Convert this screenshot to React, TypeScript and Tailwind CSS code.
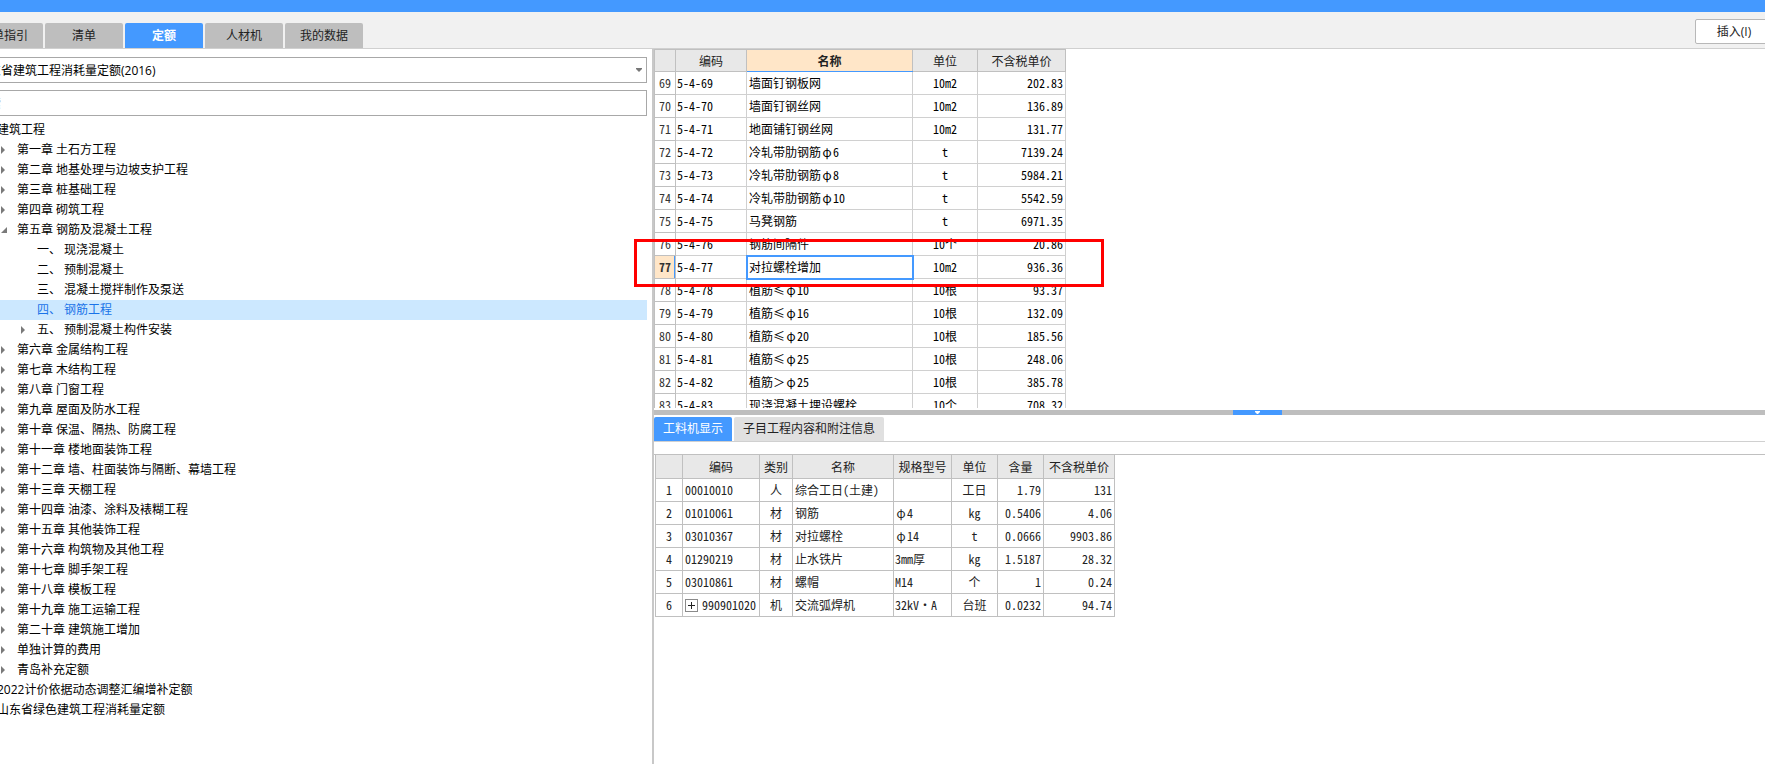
import React, { useState } from 'react';
import { clsx } from 'clsx';

interface TreeNode {
  label: string;
  level: number;
  state?: 'open' | 'closed';
}

const navTabs = ['清单指引', '清单', '定额', '人材机', '我的数据'];

const tree: TreeNode[] = [
  { label: '建筑工程', level: 0 },
  { label: '第一章 土石方工程', level: 1, state: 'closed' },
  { label: '第二章 地基处理与边坡支护工程', level: 1, state: 'closed' },
  { label: '第三章 桩基础工程', level: 1, state: 'closed' },
  { label: '第四章 砌筑工程', level: 1, state: 'closed' },
  { label: '第五章 钢筋及混凝土工程', level: 1, state: 'open' },
  { label: '一、 现浇混凝土', level: 2 },
  { label: '二、 预制混凝土', level: 2 },
  { label: '三、 混凝土搅拌制作及泵送', level: 2 },
  { label: '四、 钢筋工程', level: 2 },
  { label: '五、 预制混凝土构件安装', level: 2, state: 'closed' },
  { label: '第六章 金属结构工程', level: 1, state: 'closed' },
  { label: '第七章 木结构工程', level: 1, state: 'closed' },
  { label: '第八章 门窗工程', level: 1, state: 'closed' },
  { label: '第九章 屋面及防水工程', level: 1, state: 'closed' },
  { label: '第十章 保温、隔热、防腐工程', level: 1, state: 'closed' },
  { label: '第十一章 楼地面装饰工程', level: 1, state: 'closed' },
  { label: '第十二章 墙、柱面装饰与隔断、幕墙工程', level: 1, state: 'closed' },
  { label: '第十三章 天棚工程', level: 1, state: 'closed' },
  { label: '第十四章 油漆、涂料及裱糊工程', level: 1, state: 'closed' },
  { label: '第十五章 其他装饰工程', level: 1, state: 'closed' },
  { label: '第十六章 构筑物及其他工程', level: 1, state: 'closed' },
  { label: '第十七章 脚手架工程', level: 1, state: 'closed' },
  { label: '第十八章 模板工程', level: 1, state: 'closed' },
  { label: '第十九章 施工运输工程', level: 1, state: 'closed' },
  { label: '第二十章 建筑施工增加', level: 1, state: 'closed' },
  { label: '单独计算的费用', level: 1, state: 'closed' },
  { label: '青岛补充定额', level: 1, state: 'closed' },
  { label: '2022计价依据动态调整汇编增补定额', level: 0 },
  { label: '山东省绿色建筑工程消耗量定额', level: 0 },
];

const quotas = [
  { no: 69, code: '5-4-69', name: '墙面钉钢板网', unit: '10m2', price: '202.83' },
  { no: 70, code: '5-4-70', name: '墙面钉钢丝网', unit: '10m2', price: '136.89' },
  { no: 71, code: '5-4-71', name: '地面铺钉钢丝网', unit: '10m2', price: '131.77' },
  { no: 72, code: '5-4-72', name: '冷轧带肋钢筋φ6', unit: 't', price: '7139.24' },
  { no: 73, code: '5-4-73', name: '冷轧带肋钢筋φ8', unit: 't', price: '5984.21' },
  { no: 74, code: '5-4-74', name: '冷轧带肋钢筋φ10', unit: 't', price: '5542.59' },
  { no: 75, code: '5-4-75', name: '马凳钢筋', unit: 't', price: '6971.35' },
  { no: 76, code: '5-4-76', name: '钢筋间隔件', unit: '10个', price: '20.86' },
  { no: 77, code: '5-4-77', name: '对拉螺栓增加', unit: '10m2', price: '936.36' },
  { no: 78, code: '5-4-78', name: '植筋≤φ10', unit: '10根', price: '93.37' },
  { no: 79, code: '5-4-79', name: '植筋≤φ16', unit: '10根', price: '132.09' },
  { no: 80, code: '5-4-80', name: '植筋≤φ20', unit: '10根', price: '185.56' },
  { no: 81, code: '5-4-81', name: '植筋≤φ25', unit: '10根', price: '248.06' },
  { no: 82, code: '5-4-82', name: '植筋＞φ25', unit: '10根', price: '385.78' },
  { no: 83, code: '5-4-83', name: '现浇混凝土埋设螺栓', unit: '10个', price: '708.32' },
];

const resources = [
  { code: '00010010', kind: '人', name: '综合工日(土建)', spec: '', unit: '工日', amount: '1.79', price: '131' },
  { code: '01010061', kind: '材', name: '钢筋', spec: 'φ4', unit: 'kg', amount: '0.5406', price: '4.06' },
  { code: '03010367', kind: '材', name: '对拉螺栓', spec: 'φ14', unit: 't', amount: '0.0666', price: '9903.86' },
  { code: '01290219', kind: '材', name: '止水铁片', spec: '3mm厚', unit: 'kg', amount: '1.5187', price: '28.32' },
  { code: '03010861', kind: '材', name: '螺帽', spec: 'M14', unit: '个', amount: '1', price: '0.24' },
  { code: '990901020', kind: '机', name: '交流弧焊机', spec: '32kV·A', unit: '台班', amount: '0.0232', price: '94.74', expandable: true },
];

// the diameter sign takes a full character cell
const Spec: React.FC<{ text: string }> = ({ text }) => {
  const [before, after] = text.split('φ');
  if (after === undefined) return <>{text}</>;
  return (
    <>
      {before}
      <span className="inline-block w-3 text-center">φ</span>
      {after}
    </>
  );
};

const Arrow: React.FC<{ state: 'open' | 'closed' }> = ({ state }) => (
  <svg width="8" height="8" viewBox="0 0 8 8" fill="#7a7a7a" aria-hidden="true">
    {state === 'open' ? <path d="M7 1v6H1z" /> : <path d="M1 0v8L5 4z" />}
  </svg>
);

const TreePanel: React.FC = () => {
  const [selected, setSelected] = useState('四、 钢筋工程');

  return (
    <ul>
      {tree.map(node => (
        <li key={node.label}>
          <button
            onClick={() => setSelected(node.label)}
            className={clsx(
              'flex h-5 w-full items-center whitespace-pre text-left',
              node.level === 0 && '-ml-[3px]',
              node.level === 2 && 'pl-5',
              selected === node.label ? 'bg-[#cce8ff] text-[#1a73e8]' : 'text-black'
            )}
          >
            {node.level > 0 && (
              <span className="w-[17px] shrink-0">{node.state && <Arrow state={node.state} />}</span>
            )}
            {node.label}
          </button>
        </li>
      ))}
    </ul>
  );
};

const QuotaTable: React.FC = () => {
  const [current, setCurrent] = useState(77);
  const head = 'border border-[#c0c0c0] bg-[#e8e8e8] font-normal text-[#222]';
  const cell = 'border border-[#d0d0d0]';

  return (
    <table className="w-[412px] table-fixed border-collapse">
      <colgroup>
        <col className="w-[21px]" />
        <col className="w-[71px]" />
        <col className="w-[166px]" />
        <col className="w-[65px]" />
        <col className="w-[88px]" />
      </colgroup>
      <thead>
        <tr className="h-[22px]">
          <th className={head} />
          <th className={head}>编码</th>
          <th className="border border-[#c0c0c0] border-b-[#4499ff] bg-[#ffe6c8] font-bold text-[#222]">名称</th>
          <th className={head}>单位</th>
          <th className={head}>不含税单价</th>
        </tr>
      </thead>
      <tbody>
        {quotas.map(q => {
          const active = q.no === current;
          return (
            <tr key={q.no} className="h-[23px]" onClick={() => setCurrent(q.no)}>
              <th
                className={clsx(
                  'border border-[#c0c0c0] text-center text-[#333]',
                  active ? 'bg-[#ffe6c8] font-bold shadow-[inset_-1px_0_0_#4499ff]' : 'font-normal'
                )}
              >
                {q.no}
              </th>
              <td className={clsx(cell, 'pl-px')}>{q.code}</td>
              <td className={clsx(cell, 'pl-0.5', active && 'outline-2 -outline-offset-1 outline-[#4499ff]')}>
                <Spec text={q.name} />
              </td>
              <td className={clsx(cell, 'text-center')}>{q.unit}</td>
              <td className={clsx(cell, 'pr-0.5 text-right')}>{q.price}</td>
            </tr>
          );
        })}
      </tbody>
    </table>
  );
};

const ResourceTable: React.FC = () => {
  const cell = 'border border-[#c0c0c0] font-normal';

  return (
    <table className="-mt-px w-[460px] table-fixed border-collapse text-[#222]">
      <colgroup>
        <col className="w-[27px]" />
        <col className="w-[77px]" />
        <col className="w-[33px]" />
        <col className="w-[101px]" />
        <col className="w-[58px]" />
        <col className="w-[46px]" />
        <col className="w-[46px]" />
        <col className="w-[71px]" />
      </colgroup>
      <thead>
        <tr className="h-6 bg-[#e8e8e8]">
          {['', '编码', '类别', '名称', '规格型号', '单位', '含量', '不含税单价'].map(title => (
            <th key={title} className={cell}>{title}</th>
          ))}
        </tr>
      </thead>
      <tbody>
        {resources.map((r, i) => (
          <tr key={r.code} className="h-[23px]">
            <th className={clsx(cell, 'text-center')}>{i + 1}</th>
            <td className={clsx(cell, 'pl-0.5')}>
              <div className="flex items-center gap-1">
                {r.expandable && (
                  <button
                    aria-label="展开"
                    className="flex size-[13px] shrink-0 items-center justify-center border border-[#8a8a8a]"
                  >
                    <svg width="7" height="7" viewBox="0 0 7 7" stroke="#222" aria-hidden="true">
                      <path d="M3.5 0v7M0 3.5h7" />
                    </svg>
                  </button>
                )}
                {r.code}
              </div>
            </td>
            <td className={clsx(cell, 'text-center')}>{r.kind}</td>
            <td className={clsx(cell, 'pl-0.5')}>{r.name}</td>
            <td className={clsx(cell, 'pl-px')}>
              <Spec text={r.spec} />
            </td>
            <td className={clsx(cell, 'text-center')}>{r.unit}</td>
            <td className={clsx(cell, 'pr-0.5 text-right')}>{r.amount}</td>
            <td className={clsx(cell, 'pr-0.5 text-right')}>{r.price}</td>
          </tr>
        ))}
      </tbody>
    </table>
  );
};

export default function App() {
  const [tab, setTab] = useState('定额');
  const [detail, setDetail] = useState('工料机显示');

  return (
    <div className="flex h-screen flex-col overflow-hidden bg-white font-['Open_Sans','Noto_Sans_CJK_SC',sans-serif] text-[12px] leading-4 text-black">
      <div className="h-3 shrink-0 bg-[#4499ff]" />
      <header className="flex h-[37px] shrink-0 items-end justify-between border-b border-[#d0d0d0] bg-[#f1f1f1]">
        <nav className="-ml-[35px] flex gap-0.5">
          {navTabs.map(name => (
            <button
              key={name}
              onClick={() => setTab(name)}
              className={clsx(
                'h-[25px] w-[78px] rounded-t-xs',
                tab === name ? 'bg-[#4499ff] font-bold text-white' : 'bg-[#bebebe] text-[#222]'
              )}
            >
              {name}
            </button>
          ))}
        </nav>
        <button className="-mr-2 mb-1 h-[25px] w-[78px] rounded-xs border border-[#b8b8b8] bg-white text-[#222]">
          插入(I)
        </button>
      </header>

      <main className="flex min-h-0 flex-1">
        <aside className="w-[calc(37%-1px)] shrink-0 overflow-hidden pr-[5px] pt-2">
          <div className="relative -ml-7">
            <select
              aria-label="定额库"
              className="h-[26px] w-full appearance-none border border-[#a8a8a8] bg-white pl-1 pt-0.5 text-black"
            >
              <option>山东省建筑工程消耗量定额(2016)</option>
            </select>
            <svg className="absolute right-[5px] top-[11px]" width="6" height="4" viewBox="0 0 6 4" fill="#777" aria-hidden="true">
              <path d="M0 0h6v1L3 4 0 1z" />
            </svg>
          </div>
          <input
            aria-label="搜索"
            placeholder="搜索"
            className="-ml-7 mt-[7px] block h-[26px] w-[calc(100%+28px)] border border-[#a8a8a8] pl-1 placeholder:text-[#999]"
          />
          <div className="pt-1">
            <TreePanel />
          </div>
        </aside>

        <section className="flex min-w-0 flex-1 flex-col border-l-2 border-[#c8c8c8]">
          <div className="relative h-[361px] shrink-0 pb-0.5">
            <div className="h-full overflow-hidden font-['Noto_Sans_Mono_CJK_SC','Noto_Sans_CJK_SC',monospace]">
              <QuotaTable />
            </div>
            <div className="pointer-events-none absolute -left-5 top-[190px] h-[48px] w-[470px] border-3 border-[#ff0000]" />
          </div>
          <div className="flex h-[5px] shrink-0 justify-center bg-[#bebebe] pl-24">
            <button aria-label="收起" className="flex h-[5px] w-[49px] items-start justify-center bg-[#4499ff] pt-px">
              <svg width="5" height="3" viewBox="0 0 5 3" fill="#fff" aria-hidden="true">
                <path d="M0 0h5v1L3 3H2L0 1z" />
              </svg>
            </button>
          </div>
          <div className="flex h-[27px] shrink-0 items-end gap-0.5 border-b border-[#d0d0d0]">
            {['工料机显示', '子目工程内容和附注信息'].map(name => (
              <button
                key={name}
                onClick={() => setDetail(name)}
                className={clsx(
                  'h-6 rounded-t-xs px-[9px]',
                  detail === name ? 'bg-[#4499ff] text-white' : 'bg-[#e0e0e0] text-[#222]'
                )}
              >
                {name}
              </button>
            ))}
          </div>
          <div className="mt-3 border-t border-[#c0c0c0] pl-px font-['Noto_Sans_Mono_CJK_SC','Noto_Sans_CJK_SC',monospace]">
            <ResourceTable />
          </div>
        </section>
      </main>
    </div>
  );
}
